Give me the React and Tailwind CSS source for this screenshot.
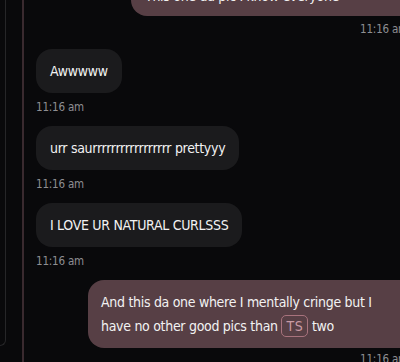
export default function App() {
  const font = { fontFamily: '"DejaVu Sans Condensed", "Liberation Sans", sans-serif' };

  return (
    <div className="w-[400px] h-[362px] overflow-hidden bg-[#09090b] flex text-[#f2f2f2]" style={font}>
      <div className="w-[22px] shrink-0 flex">
        <div className="w-[6px] h-[346px] border-r border-b border-[#262628] rounded-br-[12px]" />
      </div>
      <div className="w-[386px] shrink-0 border-l-2 border-[#3a2a2f] pl-[12px] flex flex-col">
        <SentBubble className="ml-[95px] -mt-[26px] w-[291px] pl-[14px] !pb-[8px]">
          This one da pic I know everyone
        </SentBubble>
        <Time right className="mt-[6px]" />

        <Received className="mt-[13px]">Awwwww</Received>
        <Time className="mt-[7px]" />

        <Received className="mt-[12px]">urr saurrrrrrrrrrrrrrrrr prettyyy</Received>
        <Time className="mt-[7px]" />

        <Received className="mt-[12px]">I LOVE UR NATURAL CURLSSS</Received>
        <Time className="mt-[7px]" />

        <SentBubble className="ml-[52px] mt-[12px] w-[334px] pl-[13px]">
          And this da one where I mentally cringe but I<br />
          have no other good pics than{" "}
          <span className="inline-block border border-[#a8737d] rounded-[5px] px-[4px] leading-[20px] text-[#c99ba4] tracking-[0.5px]">
            TS
          </span>{" "}
          two
        </SentBubble>
        <Time right className="mt-[4px]" />
      </div>
    </div>
  );
}

function Received({ children, className = "" }) {
  return (
    <div className={`self-start bg-[#1b1b1d] rounded-[16px] px-[14px] py-[11px] text-[14px] leading-[22px] tracking-[-0.3px] ${className}`}>
      {children}
    </div>
  );
}

function SentBubble({ children, className = "" }) {
  return (
    <div className={`bg-[#573f45] rounded-[16px] pr-[16px] py-[10px] text-[14px] leading-[24px] tracking-[-0.3px] ${className}`}>
      {children}
    </div>
  );
}

function Time({ right, className = "" }) {
  return (
    <div className={`text-[11.5px] leading-[14px] tracking-[-0.2px] text-[#8e8e92] ${right ? "self-end" : "self-start"} ${className}`}>
      11:16 am
    </div>
  );
}
